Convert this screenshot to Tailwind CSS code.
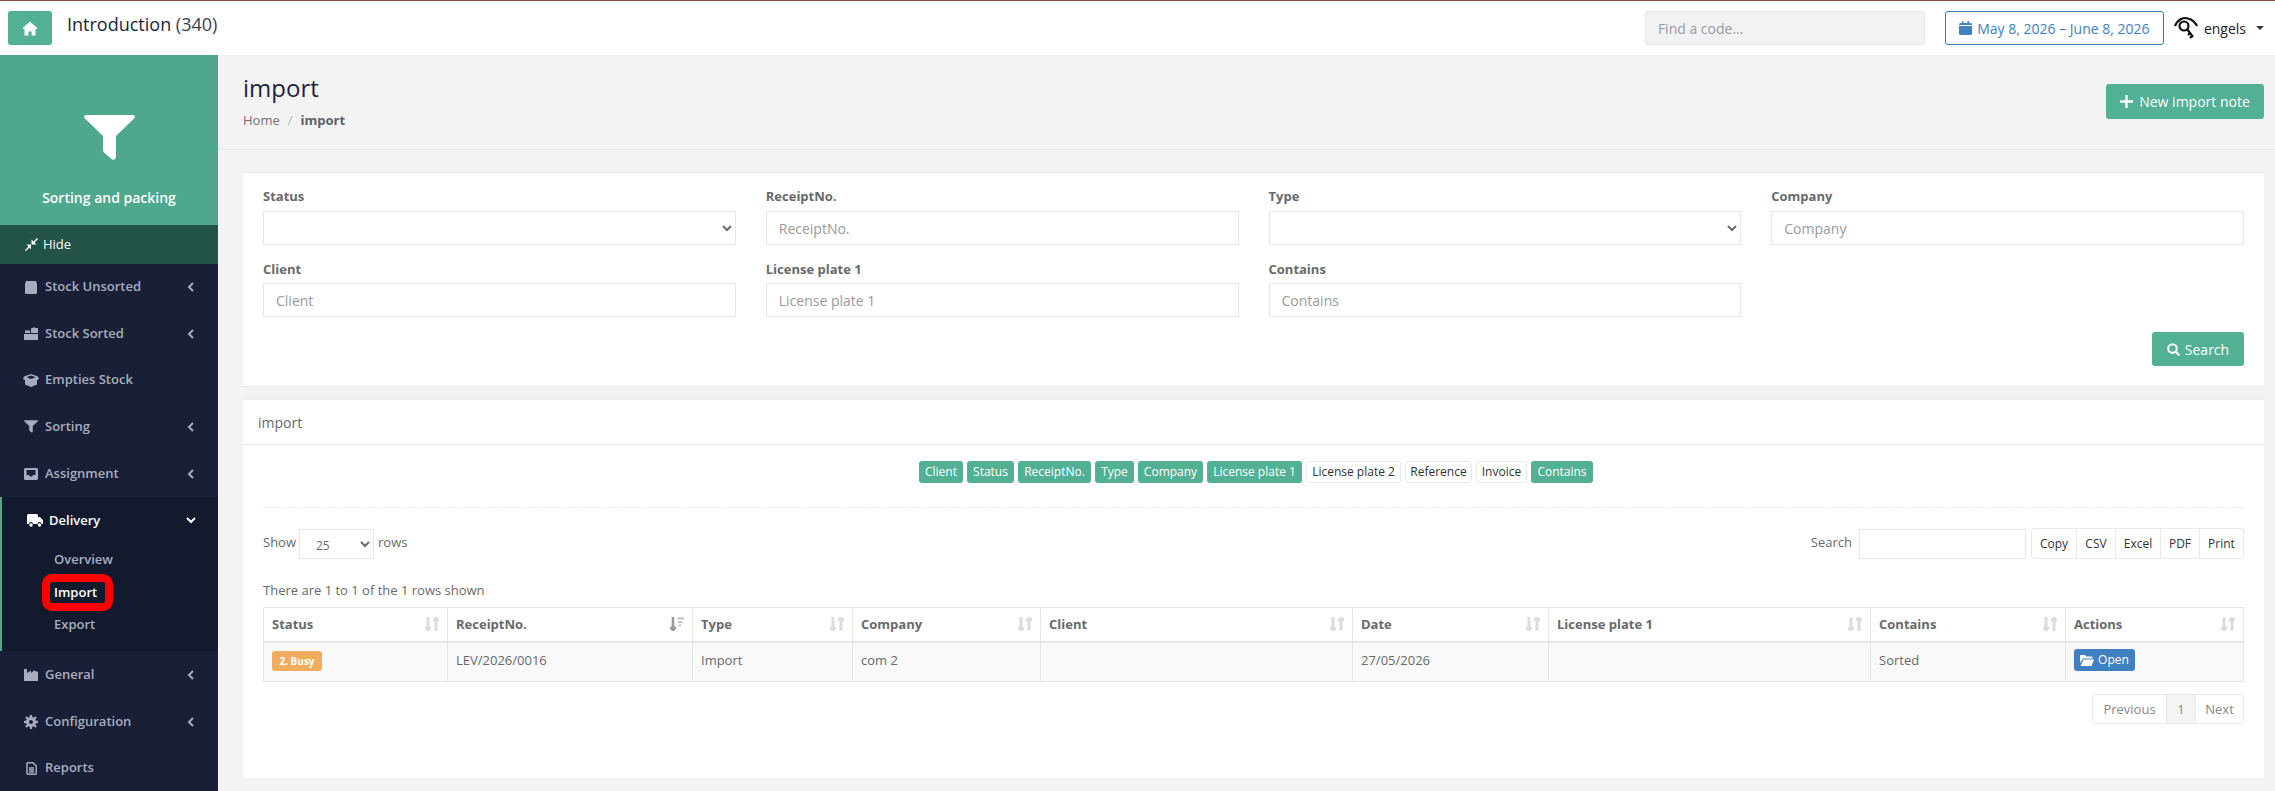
<!DOCTYPE html>
<html lang="en">
<head>
    <meta charset="UTF-8">
    <meta name="viewport" content="width=device-width, initial-scale=1.0">
    <title>import</title>
    <script src="https://cdn.jsdelivr.net/npm/@tailwindcss/browser@4"></script>
</head>
<body class="h-screen overflow-hidden bg-[#f3f3f4] font-['Open_Sans',sans-serif] text-[13px] text-[#676a6c]">
    <!-- Top bar -->
    <header class="h-[55px] bg-white border-t border-[#8a4f40] flex items-center pl-2 pr-[11px]">
        <a class="w-[44px] h-[34px] rounded-[3px] bg-[#52b094] flex items-center justify-center">
            <svg class="w-[16px] h-[15px]" viewBox="0 0 16 15" fill="#fff"><path d="M8 0.5 15.500 7.200 14.400 8.200 13.500 7.600V14.500H9.600V10.500H6.400V14.500H2.500V7.600L1.600 8.200 0.500 7.200Z"/></svg>
        </a>
        <div class="ml-[15px] text-[18px] text-[#1e2440] font-medium -mt-[7px]">Introduction <span class="font-normal text-[#3a3f55]">(340)</span></div>
        <input class="ml-auto w-[280px] h-[34px] rounded-[3px] border border-[#e5e6e7] bg-[#f1f2f4] px-3 text-[14px] placeholder:text-[#9a9a9a]" placeholder="Find a code...">
        <button class="ml-[20px] w-[219px] h-[34px] rounded-[3px] border border-[#337ab7] bg-white text-[#4280c4] text-[14px] flex items-center justify-center gap-[5px]">
            <svg class="w-[13px] h-[14px]" viewBox="0 0 13 14" fill="#4280c4"><path d="M0 5H13V12.500A1.500 1.500 0 0 1 11.500 14H1.500A1.500 1.500 0 0 1 0 12.500ZM1.500 2H3V0H4.500V2H8.500V0H10V2H11.500A1.500 1.500 0 0 1 13 3.500V4H0V3.500A1.500 1.500 0 0 1 1.500 2Z"/></svg>
            May 8, 2026 – June 8, 2026
        </button>
        <svg class="ml-[10px] w-[24px] h-[24px]" viewBox="0 0 24 24" fill="none" stroke="#111" stroke-width="2.200"><path d="M1 10C4 3 10 1 14 2.500 18 3.500 21 6 23 10"/><circle cx="10" cy="10" r="4.500"/><path d="M13 13 19 21M16 17 14 19M18 20 16 22"/></svg>
        <span class="ml-[6px] text-[14px] text-[#222]">engels</span>
        <span class="ml-[10px] w-0 h-0 border-x-[4px] border-x-transparent border-t-[4px] border-t-[#333]"></span>
    </header>

    <div class="flex h-[736px]">
        <!-- Sidebar -->
        <aside class="relative w-[218px] shrink-0 bg-[#181f36] text-[#a7adbf] font-semibold">
            <div class="h-[170px] bg-[#4ea88d] flex flex-col items-center text-white">
                <svg class="mt-[60px] w-[51px] h-[45px]" viewBox="0 0 51 45" fill="#fff"><path d="M2 0H49C50.800 0 51.500 1.800 50.300 3.200L32 21V41C32 44.500 29.800 45.500 27.500 44L20.500 38C19.500 37 19 36 19 34.500V21L0.700 3.200C-0.500 1.800 0.200 0 2 0Z"/></svg>
                <div class="mt-[28px] text-[14px] leading-[20px]">Sorting and packing</div>
            </div>
            <div class="h-[39px] bg-[#235347] text-white font-normal flex items-center pl-[25px] gap-[5px]">
                <svg class="w-[13px] h-[13px]" viewBox="0 0 13 13" fill="#fff"><path d="M13 1 9.500 4.500 11.500 6.500H6.500V1.500L8.500 3.500 12 0ZM0 12 3.500 8.500 1.500 6.500H6V11.500L4.500 9.500 1 13Z"/></svg>
                Hide
            </div>
            <nav>
                <a class="h-[46px] flex items-center pl-[24px] pr-[24px]">
                    <svg class="w-[14px] h-[13px] mr-[7px]" viewBox="0 0 14 13" fill="#a7adbf"><path d="M2 0H12L13 3V11.500A1.500 1.500 0 0 1 11.500 13H2.500A1.500 1.500 0 0 1 1 11.500V3Z"/></svg>
                    <span>Stock Unsorted</span>
                    <svg class="ml-auto w-[7px] h-[10px]" viewBox="0 0 7 10" fill="none" stroke="#a7adbf" stroke-width="2"><path d="M6 1 2 5 6 9"/></svg>
                </a>
                <a class="h-[47px] flex items-center pl-[24px] pr-[24px]">
                    <svg class="w-[14px] h-[13px] mr-[7px]" viewBox="0 0 14 13" fill="#a7adbf"><path d="M0 7H14V13H0ZM1 3.500H6V6H1ZM7 1.500 11 0V1H14V6H7Z"/></svg>
                    <span>Stock Sorted</span>
                    <svg class="ml-auto w-[7px] h-[10px]" viewBox="0 0 7 10" fill="none" stroke="#a7adbf" stroke-width="2"><path d="M6 1 2 5 6 9"/></svg>
                </a>
                <a class="h-[46px] flex items-center pl-[23px] pr-[24px]">
                    <svg class="w-[16px] h-[13px] mr-[6px]" viewBox="0 0 16 13" fill="#a7adbf"><path d="M8 0 15 2.500 16 5 14 6V10.500L8 13 2 10.500V6L0 5 1 2.500ZM8 1.500 3.500 3.200 8 5 12.500 3.200Z"/></svg>
                    <span>Empties Stock</span>
                </a>
                <a class="h-[47px] flex items-center pl-[24px] pr-[24px]">
                    <svg class="w-[14px] h-[13px] mr-[7px]" viewBox="0 0 51 45" fill="#a7adbf"><path d="M2 0H49C50.800 0 51.500 1.800 50.300 3.200L32 21V41C32 44.500 29.800 45.500 27.500 44L20.500 38C19.500 37 19 36 19 34.500V21L0.700 3.200C-0.500 1.800 0.200 0 2 0Z"/></svg>
                    <span>Sorting</span>
                    <svg class="ml-auto w-[7px] h-[10px]" viewBox="0 0 7 10" fill="none" stroke="#a7adbf" stroke-width="2"><path d="M6 1 2 5 6 9"/></svg>
                </a>
                <a class="h-[47px] flex items-center pl-[24px] pr-[24px]">
                    <svg class="w-[14px] h-[12px] mr-[7px]" viewBox="0 0 14 12" fill="#a7adbf"><path fill-rule="evenodd" d="M1.500 0H12.500A1.500 1.500 0 0 1 14 1.500V10.500A1.500 1.500 0 0 1 12.500 12H1.500A1.500 1.500 0 0 1 0 10.500V1.500A1.500 1.500 0 0 1 1.500 0ZM2.500 2V7H5L6 8.500H8L9 7H11.500V2Z"/></svg>
                    <span>Assignment</span>
                    <svg class="ml-auto w-[7px] h-[10px]" viewBox="0 0 7 10" fill="none" stroke="#a7adbf" stroke-width="2"><path d="M6 1 2 5 6 9"/></svg>
                </a>

                <!-- Active group -->
                <div class="h-[154px] bg-[#131a2e] border-l-2 border-[#4ea88d]">
                    <a class="h-[47px] flex items-center pl-[25px] pr-[22px] text-white font-semibold">
                        <svg class="w-[16px] h-[13px] mr-[6px]" viewBox="0 0 16 13" fill="#fff"><path d="M1.500 0H9.500A1.500 1.500 0 0 1 11 1.500V3H13L16 6V10H14.500A2 2 0 0 0 10.500 10H6A2 2 0 0 0 2 10H0V1.500A1.500 1.500 0 0 1 1.500 0Z"/><circle cx="4" cy="11" r="1.700"/><circle cx="12.500" cy="11" r="1.700"/></svg>
                        <span>Delivery</span>
                        <svg class="ml-auto w-[10px] h-[7px]" viewBox="0 0 10 7" fill="none" stroke="#fff" stroke-width="2"><path d="M1 1 5 5 9 1"/></svg>
                    </a>
                    <a class="block pl-[52px] mt-[3px] h-[24px] leading-[24px]">Overview</a>
                    <a class="block pl-[52px] mt-[9px] h-[24px] leading-[24px] text-white font-semibold">Import</a>
                    <a class="block pl-[52px] mt-[8px] h-[24px] leading-[24px]">Export</a>
                </div>

                <a class="h-[47px] flex items-center pl-[24px] pr-[24px]">
                    <svg class="w-[14px] h-[12px] mr-[7px]" viewBox="0 0 14 12" fill="#a7adbf"><path d="M0 0H3V4L7 1.500V4L10 1.500 14 3V12H0Z"/></svg>
                    <span>General</span>
                    <svg class="ml-auto w-[7px] h-[10px]" viewBox="0 0 7 10" fill="none" stroke="#a7adbf" stroke-width="2"><path d="M6 1 2 5 6 9"/></svg>
                </a>
                <a class="h-[47px] flex items-center pl-[24px] pr-[24px]">
                    <svg class="w-[14px] h-[14px] mr-[7px]" viewBox="0 0 14 14" fill="none" stroke="#a7adbf"><circle cx="7" cy="7" r="3.500" stroke-width="3"/><path stroke-width="2.400" d="M7 0V3M7 11V14M0 7H3M11 7H14M2 2 4 4M10 10 12 12M12 2 10 4M4 10 2 12"/></svg>
                    <span>Configuration</span>
                    <svg class="ml-auto w-[7px] h-[10px]" viewBox="0 0 7 10" fill="none" stroke="#a7adbf" stroke-width="2"><path d="M6 1 2 5 6 9"/></svg>
                </a>
                <a class="h-[46px] flex items-center pl-[26px] pr-[24px]">
                    <svg class="w-[11px] h-[13px] mr-[8px]" viewBox="0 0 11 13" fill="none" stroke="#a7adbf" stroke-width="1.500"><path d="M1 1.500A.700.700 0 0 1 1.700.800H7L10.200 4V11.500A.700.700 0 0 1 9.500 12.200H1.700A.700.700 0 0 1 1 11.500ZM3 6H8M3 8H8M3 10H8"/></svg>
                    <span>Reports</span>
                </a>
            </nav>
            <!-- Red annotation around Import -->
            <div class="absolute left-[42px] top-[519px] w-[71px] h-[37px] border-[8px] border-[#ff0000] rounded-[10px]"></div>
        </aside>

        <!-- Main -->
        <main class="flex-1 min-w-0">
            <div class="h-[95px] border-b border-[#e7eaec] px-[25px] pt-[15px] flex justify-between">
                <div>
                    <h1 class="text-[24px] leading-[36px] text-[#1e2440]">import</h1>
                    <div class="mt-[4px] flex items-center leading-[20px]">
                        <span class="text-[#6f7278]">Home</span>
                        <span class="mx-[8px] text-[#b5b5b5]">/</span>
                        <span class="font-bold text-[#5e6168]">import</span>
                    </div>
                </div>
                <button class="mt-[14px] -mr-[14px] w-[158px] h-[35px] rounded-[3px] bg-[#52b094] text-white text-[14px] flex items-center justify-center gap-[6px]">
                    <svg class="w-[13px] h-[13px]" viewBox="0 0 13 13" stroke="#fff" stroke-width="2.400"><path d="M6.500 0V13M0 6.500H13"/></svg>
                    New import note
                </button>
            </div>

            <div class="pl-[25px] pr-[11px]">
                <!-- Filters -->
                <section class="mt-[22px] h-[215px] bg-white border-y border-[#e7eaec] px-[20px] pt-[14px]">
                    <div class="grid grid-cols-4 gap-x-[30px] gap-y-[14px]">
                        <div>
                            <label class="block font-bold text-[#676a6c] leading-[19px] mb-[5px]">Status</label>
                            <select class="w-full h-[34px] bg-white border border-[#e5e6e7] pl-2"><option></option></select>
                        </div>
                        <div>
                            <label class="block font-bold text-[#676a6c] leading-[19px] mb-[5px]">ReceiptNo.</label>
                            <input class="w-full h-[34px] border border-[#e5e6e7] px-3 text-[14px] placeholder:text-[#9a9a9a]" placeholder="ReceiptNo.">
                        </div>
                        <div>
                            <label class="block font-bold text-[#676a6c] leading-[19px] mb-[5px]">Type</label>
                            <select class="w-full h-[34px] bg-white border border-[#e5e6e7] pl-2"><option></option></select>
                        </div>
                        <div>
                            <label class="block font-bold text-[#676a6c] leading-[19px] mb-[5px]">Company</label>
                            <input class="w-full h-[34px] border border-[#e5e6e7] px-3 text-[14px] placeholder:text-[#9a9a9a]" placeholder="Company">
                        </div>
                        <div>
                            <label class="block font-bold text-[#676a6c] leading-[19px] mt-[1px] mb-[4px]">Client</label>
                            <input class="w-full h-[34px] border border-[#e5e6e7] px-3 text-[14px] placeholder:text-[#9a9a9a]" placeholder="Client">
                        </div>
                        <div>
                            <label class="block font-bold text-[#676a6c] leading-[19px] mt-[1px] mb-[4px]">License plate 1</label>
                            <input class="w-full h-[34px] border border-[#e5e6e7] px-3 text-[14px] placeholder:text-[#9a9a9a]" placeholder="License plate 1">
                        </div>
                        <div>
                            <label class="block font-bold text-[#676a6c] leading-[19px] mt-[1px] mb-[4px]">Contains</label>
                            <input class="w-full h-[34px] border border-[#e5e6e7] px-3 text-[14px] placeholder:text-[#9a9a9a]" placeholder="Contains">
                        </div>
                    </div>
                    <div class="flex justify-end mt-[15px]">
                        <button class="w-[92px] h-[34px] rounded-[3px] bg-[#52b094] text-white text-[14px] flex items-center justify-center gap-[5px]">
                            <svg class="w-[13px] h-[13px]" viewBox="0 0 13 13" fill="none" stroke="#fff" stroke-width="2"><circle cx="5.500" cy="5.500" r="4.300"/><path d="M8.500 8.500 12.500 12.500"/></svg>
                            Search
                        </button>
                    </div>
                </section>

                <!-- Results -->
                <section class="mt-[10px] h-[381px] bg-white border-t-[3px] border-[#eeeeee]">
                    <div class="h-[45px] border-b border-[#e7eaec] flex items-center pl-[15px] text-[14px] font-normal">import</div>
                    <div class="px-[20px]">
                        <div class="pt-[16px] pb-[24px] border-b border-dashed border-[#e7eaec] flex justify-center gap-[4px] text-[12px] pl-[5px]">
                            <span class="h-[22px] w-[44px] leading-[22px] text-center rounded-[3px] bg-[#52b094] text-white">Client</span>
                            <span class="h-[22px] w-[47px] leading-[22px] text-center rounded-[3px] bg-[#52b094] text-white">Status</span>
                            <span class="h-[22px] w-[73px] leading-[22px] text-center rounded-[3px] bg-[#52b094] text-white">ReceiptNo.</span>
                            <span class="h-[22px] w-[39px] leading-[22px] text-center rounded-[3px] bg-[#52b094] text-white">Type</span>
                            <span class="h-[22px] w-[65px] leading-[22px] text-center rounded-[3px] bg-[#52b094] text-white">Company</span>
                            <span class="h-[22px] w-[95px] leading-[22px] text-center rounded-[3px] bg-[#52b094] text-white">License plate 1</span>
                            <span class="h-[22px] w-[95px] leading-[20px] text-center rounded-[3px] bg-white border border-[#e7eaec] text-[#333]">License plate 2</span>
                            <span class="h-[22px] w-[67px] leading-[20px] text-center rounded-[3px] bg-white border border-[#e7eaec] text-[#333]">Reference</span>
                            <span class="h-[22px] w-[51px] leading-[20px] text-center rounded-[3px] bg-white border border-[#e7eaec] text-[#333]">Invoice</span>
                            <span class="h-[22px] w-[62px] leading-[22px] text-center rounded-[3px] bg-[#52b094] text-white">Contains</span>
                        </div>

                        <div class="mt-[20px] flex items-center h-[31px]">
                            <span class="mr-[3px] -mt-[2px]">Show</span>
                            <select class="w-[75px] h-[30px] bg-white border border-[#e5e6e7] pl-[12px] pt-[3px] text-[12px]"><option>25</option></select>
                            <span class="ml-[4px] -mt-[2px]">rows</span>
                            <span class="ml-auto mr-[7px] -mt-[2px]">Search</span>
                            <input class="w-[167px] h-[30px] border border-[#e5e6e7]">
                            <div class="ml-[5px] h-[31px] w-[213px] flex border border-[#e7eaec] rounded-[3px] text-[12px] text-[#333] divide-x divide-[#e7eaec]">
                                <span class="w-[45px] text-center leading-[29px]">Copy</span>
                                <span class="w-[39px] text-center leading-[29px]">CSV</span>
                                <span class="w-[45px] text-center leading-[29px]">Excel</span>
                                <span class="w-[39px] text-center leading-[29px]">PDF</span>
                                <span class="flex-1 text-center leading-[29px]">Print</span>
                            </div>
                        </div>

                        <div class="mt-[22px] mb-[8px] leading-[18px]">There are 1 to 1 of the 1 rows shown</div>

                        <table class="w-full table-fixed border-collapse">
                            <colgroup>
                                <col class="w-[184px]"><col class="w-[245px]"><col class="w-[160px]"><col class="w-[188px]"><col class="w-[312px]"><col class="w-[196px]"><col class="w-[322px]"><col class="w-[195px]"><col>
                            </colgroup>
                            <thead>
                                <tr class="h-[34px]">
                                    <th class="border border-b-2 border-[#e7e7e7] px-[8px] text-left"><div class="flex items-center justify-between">Status<svg class="w-[14px] h-[14px]" viewBox="0 0 14 14" fill="none" stroke="#dcdcdc" stroke-width="3"><path d="M3 0V13M0.500 10 3 13.500 5.500 10M11 14V1M8.500 4 11 0.500 13.500 4"/></svg></div></th>
                                    <th class="border border-b-2 border-[#e7e7e7] px-[8px] text-left"><div class="flex items-center justify-between">ReceiptNo.<svg class="w-[14px] h-[14px]" viewBox="0 0 14 14" fill="none" stroke="#9a9a9a" stroke-width="2.600"><path d="M3 0V13M0.500 10 3 13.500 5.500 10"/><path stroke="#c4c4c4" stroke-width="2.200" d="M7.500 1.500H14M8 5H12.500M8.500 8.500H11"/></svg></div></th>
                                    <th class="border border-b-2 border-[#e7e7e7] px-[8px] text-left"><div class="flex items-center justify-between">Type<svg class="w-[14px] h-[14px]" viewBox="0 0 14 14" fill="none" stroke="#dcdcdc" stroke-width="3"><path d="M3 0V13M0.500 10 3 13.500 5.500 10M11 14V1M8.500 4 11 0.500 13.500 4"/></svg></div></th>
                                    <th class="border border-b-2 border-[#e7e7e7] px-[8px] text-left"><div class="flex items-center justify-between">Company<svg class="w-[14px] h-[14px]" viewBox="0 0 14 14" fill="none" stroke="#dcdcdc" stroke-width="3"><path d="M3 0V13M0.500 10 3 13.500 5.500 10M11 14V1M8.500 4 11 0.500 13.500 4"/></svg></div></th>
                                    <th class="border border-b-2 border-[#e7e7e7] px-[8px] text-left"><div class="flex items-center justify-between">Client<svg class="w-[14px] h-[14px]" viewBox="0 0 14 14" fill="none" stroke="#dcdcdc" stroke-width="3"><path d="M3 0V13M0.500 10 3 13.500 5.500 10M11 14V1M8.500 4 11 0.500 13.500 4"/></svg></div></th>
                                    <th class="border border-b-2 border-[#e7e7e7] px-[8px] text-left"><div class="flex items-center justify-between">Date<svg class="w-[14px] h-[14px]" viewBox="0 0 14 14" fill="none" stroke="#dcdcdc" stroke-width="3"><path d="M3 0V13M0.500 10 3 13.500 5.500 10M11 14V1M8.500 4 11 0.500 13.500 4"/></svg></div></th>
                                    <th class="border border-b-2 border-[#e7e7e7] px-[8px] text-left"><div class="flex items-center justify-between">License plate 1<svg class="w-[14px] h-[14px]" viewBox="0 0 14 14" fill="none" stroke="#dcdcdc" stroke-width="3"><path d="M3 0V13M0.500 10 3 13.500 5.500 10M11 14V1M8.500 4 11 0.500 13.500 4"/></svg></div></th>
                                    <th class="border border-b-2 border-[#e7e7e7] px-[8px] text-left"><div class="flex items-center justify-between">Contains<svg class="w-[14px] h-[14px]" viewBox="0 0 14 14" fill="none" stroke="#dcdcdc" stroke-width="3"><path d="M3 0V13M0.500 10 3 13.500 5.500 10M11 14V1M8.500 4 11 0.500 13.500 4"/></svg></div></th>
                                    <th class="border border-b-2 border-[#e7e7e7] px-[8px] text-left"><div class="flex items-center justify-between">Actions<svg class="w-[14px] h-[14px]" viewBox="0 0 14 14" fill="none" stroke="#dcdcdc" stroke-width="3"><path d="M3 0V13M0.500 10 3 13.500 5.500 10M11 14V1M8.500 4 11 0.500 13.500 4"/></svg></div></th>
                                </tr>
                            </thead>
                            <tbody>
                                <tr class="h-[40px] bg-[#f9f9f9]">
                                    <td class="border border-[#e7e7e7] px-[8px] pb-[3px]"><span class="inline-block w-[50px] h-[20px] rounded-[3px] bg-[#f0ad5e] text-white text-[10px] font-bold leading-[20px] text-center align-middle">2. Busy</span></td>
                                    <td class="border border-[#e7e7e7] px-[8px] pb-[3px]">LEV/2026/0016</td>
                                    <td class="border border-[#e7e7e7] px-[8px] pb-[3px]">Import</td>
                                    <td class="border border-[#e7e7e7] px-[8px] pb-[3px]">com 2</td>
                                    <td class="border border-[#e7e7e7] px-[8px] pb-[3px]"></td>
                                    <td class="border border-[#e7e7e7] px-[8px] pb-[3px]">27/05/2026</td>
                                    <td class="border border-[#e7e7e7] px-[8px] pb-[3px]"></td>
                                    <td class="border border-[#e7e7e7] px-[8px] pb-[3px]">Sorted</td>
                                    <td class="border border-[#e7e7e7] px-[8px] pb-[3px]">
                                        <span class="w-[61px] h-[22px] rounded-[3px] bg-[#3f80c2] text-white text-[12px] inline-flex items-center justify-center gap-[4px] align-middle">
                                            <svg class="w-[14px] h-[11px]" viewBox="0 0 14 11" fill="#fff"><path d="M1 0H5L6.500 1.500H11.500A1 1 0 0 1 12.500 2.500V3.500H3L0 8V1A1 1 0 0 1 1 0ZM3.500 4.500H14L11.500 11H0.500Z"/></svg>
                                            Open
                                        </span>
                                    </td>
                                </tr>
                            </tbody>
                        </table>

                        <div class="mt-[12px] flex justify-end">
                            <div class="flex h-[30px] w-[152px] border border-[#e7e7e7] rounded-[3px] divide-x divide-[#e7e7e7] text-[#888]">
                                <span class="w-[74px] text-center leading-[28px]">Previous</span>
                                <span class="w-[29px] text-center leading-[28px] bg-[#f4f4f4]">1</span>
                                <span class="flex-1 text-center leading-[28px]">Next</span>
                            </div>
                        </div>
                    </div>
                </section>
            </div>
        </main>
    </div>
</body>
</html>
